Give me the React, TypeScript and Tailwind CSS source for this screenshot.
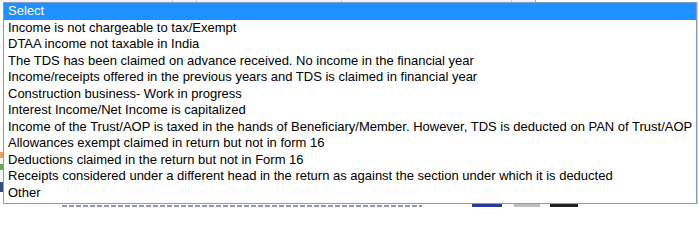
const options = [
  "Select",
  "Income is not chargeable to tax/Exempt",
  "DTAA income not taxable in India",
  "The TDS has been claimed on advance received. No income in the financial year",
  "Income/receipts offered in the previous years and TDS is claimed in financial year",
  "Construction business- Work in progress",
  "Interest Income/Net Income is capitalized",
  "Income of the Trust/AOP is taxed in the hands of Beneficiary/Member. However, TDS is deducted on PAN of Trust/AOP",
  "Allowances exempt claimed in return but not in form 16",
  "Deductions claimed in the return but not in Form 16",
  "Receipts considered under a different head in the return as against the section under which it is deducted",
  "Other",
];

function App() {
  return (
    <div className="w-[698px] h-[207px] overflow-hidden bg-white flex flex-col font-['Liberation_Sans',Arial,sans-serif] text-[13px] text-black">
      {/* page behind the list: top strip */}
      <div className="h-[2px] flex bg-[#f4f4f4]">
        <div className="w-[173px] border-r border-[#c8c8c8]" />
        <div className="w-[24px] border-r border-[#c8c8c8]" />
        <div className="w-[145px] border-r border-[#c8c8c8]" />
        <div className="w-[170px] border-r border-[#c8c8c8]" />
        <div className="w-[23px]" />
        <div className="flex-1 border-l border-[#8fa5d6] bg-white" />
      </div>

      <div className="flex h-[202px]">
        {/* left gutter */}
        <div className="w-[3px] flex flex-col bg-white">
          <div className="h-[150px]" />
          <div className="h-[6px] bg-[#e8a060]" />
          <div className="h-[6px] bg-[#ffffff]" />
          <div className="h-[6px] bg-[#6aa060]" />
          <div className="h-[12px]" />
          <div className="h-[10px] bg-[#3a4a80]" />
        </div>

        {/* dropdown list */}
        <div className="w-[694px] border border-[#7f9dc9] bg-white pl-[4px] flex flex-col">
          {options.map((o, i) => (
            <div
              key={o}
              className={
                i === 0
                  ? "h-[16.5px] leading-[16.5px] whitespace-nowrap -ml-[4px] pl-[4px] bg-[#1e90ff] text-white"
                  : "h-[16.5px] leading-[16.5px] whitespace-nowrap"
              }
            >
              {o}
            </div>
          ))}
        </div>

        {/* right gutter */}
        <div className="flex-1 border-l border-[#d0d0d0] bg-[#f7f7f7]" />
      </div>

      {/* page footer peeking under the list */}
      <div className="h-[3px] flex items-end">
        <div className="w-[62px]" />
        <div className="w-[360px] h-[2px] bg-[repeating-linear-gradient(90deg,#5a6a9a_0px,#5a6a9a_5px,transparent_5px,transparent_7px)] opacity-70" />
        <div className="w-[50px]" />
        <div className="w-[30px] h-[3px] bg-[#2a3a9a]" />
        <div className="w-[12px]" />
        <div className="w-[26px] h-[3px] bg-[#bdbdbd]" />
        <div className="w-[10px]" />
        <div className="w-[28px] h-[3px] bg-[#222]" />
      </div>
    </div>
  );
}

export default App;
